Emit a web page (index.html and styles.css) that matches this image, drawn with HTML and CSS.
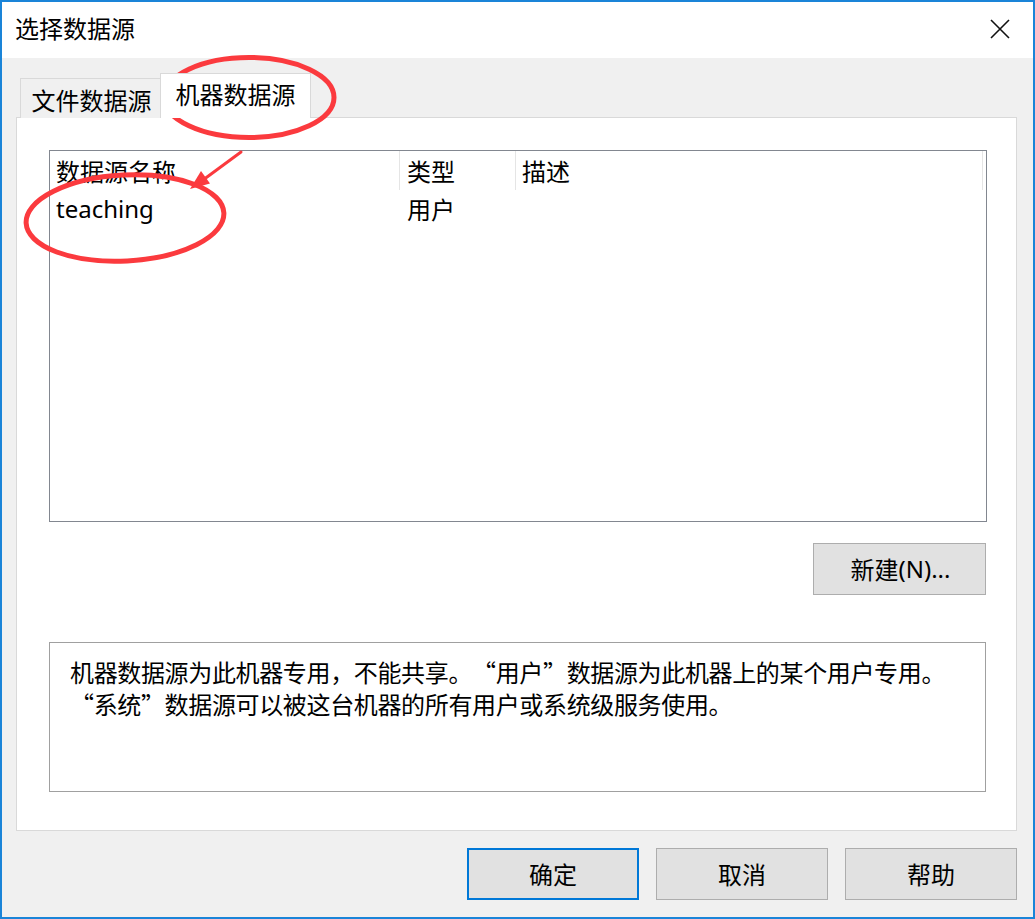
FILE: index.html
```html
<!DOCTYPE html>
<html lang="zh-CN">
<head>
<meta charset="utf-8">
<title>选择数据源</title>
<link rel="stylesheet" href="styles.css">
</head>
<body>
<div class="window">
  <div class="titlebar">
    <span class="title">选择数据源</span>
    <svg class="close" width="20" height="20" viewBox="0 0 20 20"><path d="M1 1 L19 19 M19 1 L1 19" stroke="#111" stroke-width="1.6" fill="none"/></svg>
  </div>
  <div class="client">
    <div class="tabs">
      <div class="tab">文件数据源</div>
      <div class="tab active">机器数据源</div>
    </div>
    <div class="panel">
      <div class="listbox">
        <div class="lrow header">
          <div class="c1">数据源名称</div>
          <div class="c2">类型</div>
          <div class="c3">描述</div>
        </div>
        <div class="lrow">
          <div class="c1 latin">teaching</div>
          <div class="c2">用户</div>
          <div class="c3"></div>
        </div>
      </div>
      <div class="newrow">
        <button class="btn new">新建<span class="latin">(N)...</span></button>
      </div>
      <div class="desc">
        机器数据源为此机器专用，不能共享。“用户”数据源为此机器上的某个用户专用。<br>“系统”数据源可以被这台机器的所有用户或系统级服务使用。
      </div>
    </div>
    <div class="actions">
      <button class="btn default">确定</button>
      <button class="btn">取消</button>
      <button class="btn">帮助</button>
    </div>
  </div>
  <svg class="marks" width="1035" height="919" viewBox="0 0 1035 919">
    <ellipse cx="249" cy="97.5" rx="85" ry="40" fill="none" stroke="#fb3a3e" stroke-width="5"/>
    <ellipse cx="125" cy="218" rx="99" ry="43" fill="none" stroke="#fb3a3e" stroke-width="5" transform="rotate(-3 125 218)"/>
    <line x1="241" y1="152" x2="203" y2="180" stroke="#fb3a3e" stroke-width="3" stroke-linecap="round"/>
    <polygon points="190,189 210,183.5 201,171" fill="#fb3a3e"/>
  </svg>
</div>
</body>
</html>
```
FILE: styles.css
```css
* { box-sizing: border-box; }
html, body { margin: 0; padding: 0; background: #ffffff; }
body {
  font-family: "Noto Sans CJK SC", "Microsoft YaHei", sans-serif;
  font-size: 24px;
  color: #000;
}
.latin { font-family: "Noto Sans", "Noto Sans CJK SC", sans-serif; }
.window {
  position: relative;
  width: 1035px;
  height: 919px;
  border: 2px solid #1a84d8;
  background: #f0f0f0;
  display: flex;
  flex-direction: column;
}
.titlebar {
  height: 56px;
  background: #ffffff;
  display: flex;
  align-items: center;
  justify-content: space-between;
  padding: 0 23px 0 13px;
  flex: none;
}
.title { line-height: 1; margin-top: -4px; }
.close { display: block; margin-top: -2px; }
.client {
  padding: 16px 16px 0 14px;
  display: flex;
  flex-direction: column;
}
.tabs {
  height: 44px;
  display: flex;
  align-items: flex-end;
  padding-left: 4px;
  position: relative;
  z-index: 1;
  margin-bottom: -1px;
}
.tab {
  width: 141px;
  height: 40px;
  border: 1px solid #d9d9d9;
  border-bottom: none;
  background: #f0f0f0;
  display: flex;
  align-items: center;
  justify-content: center;
  padding-top: 3px;
  padding-left: 2px;
  line-height: 1;
}
.tab.active {
  width: 151px;
  height: 45px;
  background: #ffffff;
  margin-left: -1px;
  padding-top: 0;
  padding-left: 0;
  padding-bottom: 4px;
}
.panel {
  width: 1001px;
  height: 714px;
  background: #ffffff;
  border: 1px solid #d9d9d9;
  padding: 32px 0 0 32px;
}
.listbox {
  width: 938px;
  height: 372px;
  border: 1px solid #828790;
  background: #fff;
}
.lrow {
  display: flex;
  height: 40px;
  align-items: center;
}
.lrow.header { height: 39px; align-items: stretch; }
.lrow > div {
  padding-left: 6px;
  padding-bottom: 3px;
  white-space: nowrap;
  display: flex;
  align-items: center;
  height: 100%;
}
.lrow.header > div { padding-top: 0; padding-bottom: 0; }
.c1 { width: 350px; }
.c2 { width: 116px; }
.c3 { width: 467px; }
.header .c1, .header .c2, .header .c3 { border-right: 1px solid #e5e5e5; }
.lrow .c2 { padding-left: 7px; }
.newrow {
  width: 937px;
  display: flex;
  justify-content: flex-end;
  margin-top: 21px;
}
.btn {
  font-family: "Noto Sans CJK SC", sans-serif;
  font-size: 24px;
  color: #000;
  background: #e1e1e1;
  border: 1px solid #adadad;
  width: 172px;
  height: 52px;
  padding: 0;
  margin: 0;
  line-height: 1;
  display: flex;
  align-items: center;
  justify-content: center;
}
.btn.new { width: 173px; padding-left: 2px; }
.btn.default { border: 2px solid #0078d7; }
.desc {
  width: 937px;
  height: 150px;
  margin-top: 47px;
  border: 1px solid #a0a0a0;
  padding: 13px 0 0 20px;
  line-height: 32px;
  white-space: nowrap;
  letter-spacing: -0.35px;
  text-spacing-trim: space-all;
}
.actions {
  display: flex;
  justify-content: flex-end;
  gap: 17px;
  margin-top: 17px;
  width: 1001px;
}
.marks {
  position: absolute;
  left: -2px;
  top: -2px;
  pointer-events: none;
}
```
